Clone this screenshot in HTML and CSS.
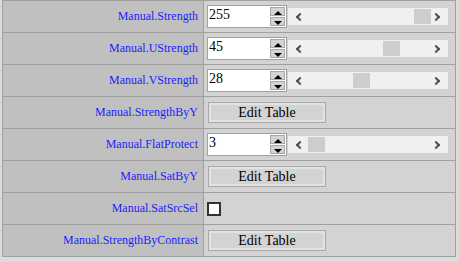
FILE: index.html
```
<!DOCTYPE html>
<html>
<head>
  <meta charset="UTF-8">
  <title>Manual</title>
  <link rel="stylesheet" href="styles.css">
</head>
<body>
  <table class="params">
    <tr>
      <td class="name">Manual.Strength</td>
      <td class="ctl">
        <div class="row">
          <div class="spin"><span class="val">255</span><div class="arrows"><span class="up"></span><span class="down"></span></div></div>
          <div class="bar"><span class="lt"></span><span class="thumb" style="left:126px"></span><span class="gt"></span></div>
        </div>
      </td>
    </tr>
    <tr>
      <td class="name">Manual.UStrength</td>
      <td class="ctl">
        <div class="row">
          <div class="spin"><span class="val">45</span><div class="arrows"><span class="up"></span><span class="down"></span></div></div>
          <div class="bar"><span class="lt"></span><span class="thumb" style="left:95px"></span><span class="gt"></span></div>
        </div>
      </td>
    </tr>
    <tr>
      <td class="name">Manual.VStrength</td>
      <td class="ctl">
        <div class="row">
          <div class="spin"><span class="val">28</span><div class="arrows"><span class="up"></span><span class="down"></span></div></div>
          <div class="bar"><span class="lt"></span><span class="thumb" style="left:65px"></span><span class="gt"></span></div>
        </div>
      </td>
    </tr>
    <tr>
      <td class="name">Manual.StrengthByY</td>
      <td class="ctl"><button class="edit">Edit Table</button></td>
    </tr>
    <tr>
      <td class="name">Manual.FlatProtect</td>
      <td class="ctl">
        <div class="row">
          <div class="spin"><span class="val">3</span><div class="arrows"><span class="up"></span><span class="down"></span></div></div>
          <div class="bar"><span class="lt"></span><span class="thumb" style="left:20px"></span><span class="gt"></span></div>
        </div>
      </td>
    </tr>
    <tr>
      <td class="name">Manual.SatByY</td>
      <td class="ctl"><button class="edit">Edit Table</button></td>
    </tr>
    <tr>
      <td class="name">Manual.SatSrcSel</td>
      <td class="ctl"><span class="check"></span></td>
    </tr>
    <tr>
      <td class="name">Manual.StrengthByContrast</td>
      <td class="ctl"><button class="edit">Edit Table</button></td>
    </tr>
  </table>
</body>
</html>
```

FILE: styles.css
```
body{
  margin:0 0 0 2px;
  background-color:#dcdcdc;
  font-family:"Liberation Serif", serif;
}
.params{
  border-collapse:collapse;
  width:454px;
}
.params td{
  border:1px solid #a0a0a0;
  height:31px;
  padding:0;
}
.name{
  width:195px;
  background-color:#c0c0c0;
  color:#2020ff;
  font-size:12px;
  text-align:right;
  padding-right:5px !important;
}
.ctl{
  background-color:#d3d3d3;
  padding-left:3px !important;
}
.row{
  display:flex;
  align-items:center;
}
.spin{
  display:flex;
  border:1px solid #a0a0a0;
  background-color:#fff;
  box-sizing:border-box;
  width:80px;
  height:23px;
}
.val{
  flex:1;
  font-size:14px;
  line-height:18px;
  padding-left:1px;
  color:#000;
}
.arrows{
  display:flex;
  flex-direction:column;
  width:15px;
  padding:1px;
  gap:1px;
}
.arrows span{
  flex:1;
  background-color:#d3d3d3;
  border:1px solid #a8a8a8;
  position:relative;
}
.up::after,.down::after{
  content:"";
  position:absolute;
  left:3px;
  top:3px;
  border-left:4px solid transparent;
  border-right:4px solid transparent;
}
.up::after{border-bottom:4px solid #000;}
.down::after{border-top:4px solid #000;}
.bar{
  position:relative;
  width:160px;
  height:17px;
  background-color:#f0f0f0;
  margin-left:1px;
}
.thumb{
  position:absolute;
  top:1px;
  width:17px;
  height:15px;
  background-color:#cdcdcd;
}
.lt,.gt{
  position:absolute;
  top:6px;
  width:4px;
  height:4px;
  border-left:2px solid #505050;
  border-bottom:2px solid #505050;
}
.lt{left:9px; transform:rotate(45deg);}
.gt{right:9px; transform:rotate(-135deg);}
.edit{
  width:118px;
  height:21px;
  font-family:"Liberation Serif", serif;
  font-size:14px;
  color:#000;
  background-color:#d3d3d3;
  border:1px solid #a9a9a9;
  box-shadow:inset 0 0 0 2px #e2e2e2;
  padding:0;
  margin-left:1px;
}
.check{
  display:block;
  width:10px;
  height:10px;
  background-color:#fff;
  border:2px solid #333;
}
```
